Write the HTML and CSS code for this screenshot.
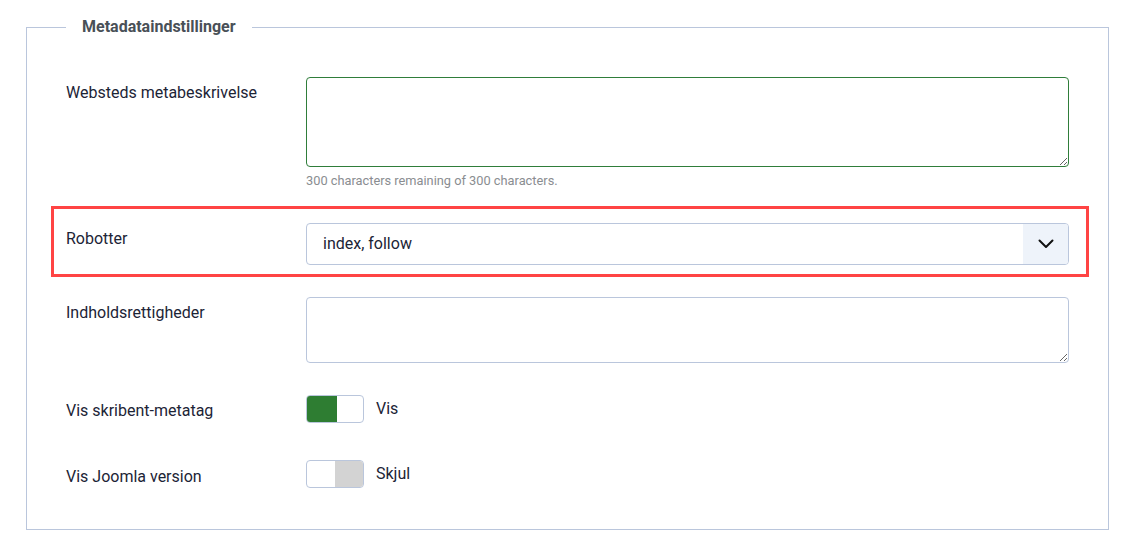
FILE: index.html
```html
<!DOCTYPE html>
<html lang="da">
<head>
<meta charset="utf-8">
<title>Metadataindstillinger</title>
<link rel="stylesheet" href="styles.css">
</head>
<body>
<fieldset class="options">
  <legend class="options-title">Metadataindstillinger</legend>

  <div class="field field-desc">
    <label class="field-label" for="metadesc">Websteds metabeskrivelse</label>
    <div class="field-control">
      <textarea id="metadesc" class="input input-valid input-desc"></textarea>
      <div class="char-count">300 characters remaining of 300 characters.</div>
    </div>
  </div>

  <div class="field field-robots highlight">
    <label class="field-label" for="robots">Robotter</label>
    <div class="field-control">
      <div class="select" id="robots">
        <span class="select-value">index, follow</span>
        <span class="select-button">
          <svg width="16" height="10" viewBox="0 0 16 10" aria-hidden="true"><path d="M1.5 1.5 L8 8 L14.5 1.5" fill="none" stroke="#111" stroke-width="2" stroke-linecap="round" stroke-linejoin="round"/></svg>
        </span>
      </div>
    </div>
  </div>

  <div class="field field-rights">
    <label class="field-label" for="rights">Indholdsrettigheder</label>
    <div class="field-control">
      <textarea id="rights" class="input input-rights"></textarea>
    </div>
  </div>

  <div class="field field-switch field-author">
    <span class="field-label">Vis skribent-metatag</span>
    <div class="field-control switch-row">
      <span class="switch switch-on"><span class="switch-knob"></span></span>
      <span class="switch-text">Vis</span>
    </div>
  </div>

  <div class="field field-switch field-version">
    <span class="field-label">Vis Joomla version</span>
    <div class="field-control switch-row">
      <span class="switch switch-off"><span class="switch-knob"></span></span>
      <span class="switch-text">Skjul</span>
    </div>
  </div>
</fieldset>
</body>
</html>
```

FILE: styles.css
```css
* {
  box-sizing: border-box;
}

html, body {
  margin: 0;
  padding: 0;
  background: #fff;
}

body {
  font-family: Roboto, "Noto Sans", Arial, sans-serif;
  font-size: 16px;
  color: #1c2436;
  padding: 17px 34px 0 26px;
}

.options {
  margin: 0;
  width: 1083px;
  height: 513px;
  border: 1px solid #bac6dc;
  padding: 0 39px 0 39px;
}

.options-title {
  padding: 0 16px;
  font-size: 16px;
  font-weight: 700;
  line-height: 20px;
  color: #495057;
}

.field {
  display: grid;
  grid-template-columns: 240px 1fr;
  align-items: start;
}

.field-label {
  font-size: 16px;
  line-height: 20px;
  color: #1c2436;
}

.field-desc {
  margin-top: 40px;
}

.field-desc .field-label {
  padding-top: 6px;
}

.input {
  display: block;
  width: 100%;
  border: 1px solid #bac6dc;
  border-radius: 4px;
  background: #fff;
  resize: vertical;
  font: inherit;
  margin: 0;
}

.input-valid {
  border-color: #2f7d3a;
}

.input-desc {
  height: 90px;
}

.char-count {
  font-size: 12.8px;
  line-height: 16px;
  color: #8a8d91;
  margin-top: 6px;
}

/* highlighted robots row */
.highlight {
  margin: 17px -20px 0 -15px;
  padding: 14px 17px 9px 12px;
  border: 3px solid #ff4444;
}

.field-robots .field-label {
  padding-top: 6px;
}

.select {
  display: flex;
  height: 42px;
  border: 1px solid #bac6dc;
  border-radius: 4px;
  overflow: hidden;
}

.select-value {
  flex: 1;
  padding-left: 16px;
  line-height: 40px;
  font-size: 16px;
  color: #1c2436;
}

.select-button {
  width: 45px;
  background: #eef3fa;
  display: flex;
  align-items: center;
  justify-content: center;
}

.field-rights {
  margin-top: 20px;
}

.field-rights .field-label {
  padding-top: 6px;
}

.input-rights {
  height: 66px;
}

.field-author {
  margin-top: 32px;
}

.field-version {
  margin-top: 37px;
}

.field-author .field-label {
  padding-top: 6px;
}

.field-version .field-label {
  padding-top: 7px;
}

.switch-row {
  display: flex;
  align-items: center;
  gap: 12px;
}

.switch {
  display: flex;
  width: 58px;
  height: 28px;
  border: 1px solid #bac6dc;
  border-radius: 4px;
  overflow: hidden;
  background: #fff;
}

.switch-knob {
  display: block;
  width: 30px;
  height: 100%;
}

.switch-on .switch-knob {
  background: #2e7d32;
}

.switch-off {
  justify-content: flex-end;
}

.switch-off .switch-knob {
  width: 28px;
  background: #d3d3d3;
}

.switch-text {
  font-size: 16px;
  line-height: 20px;
  color: #1c2436;
}
```
